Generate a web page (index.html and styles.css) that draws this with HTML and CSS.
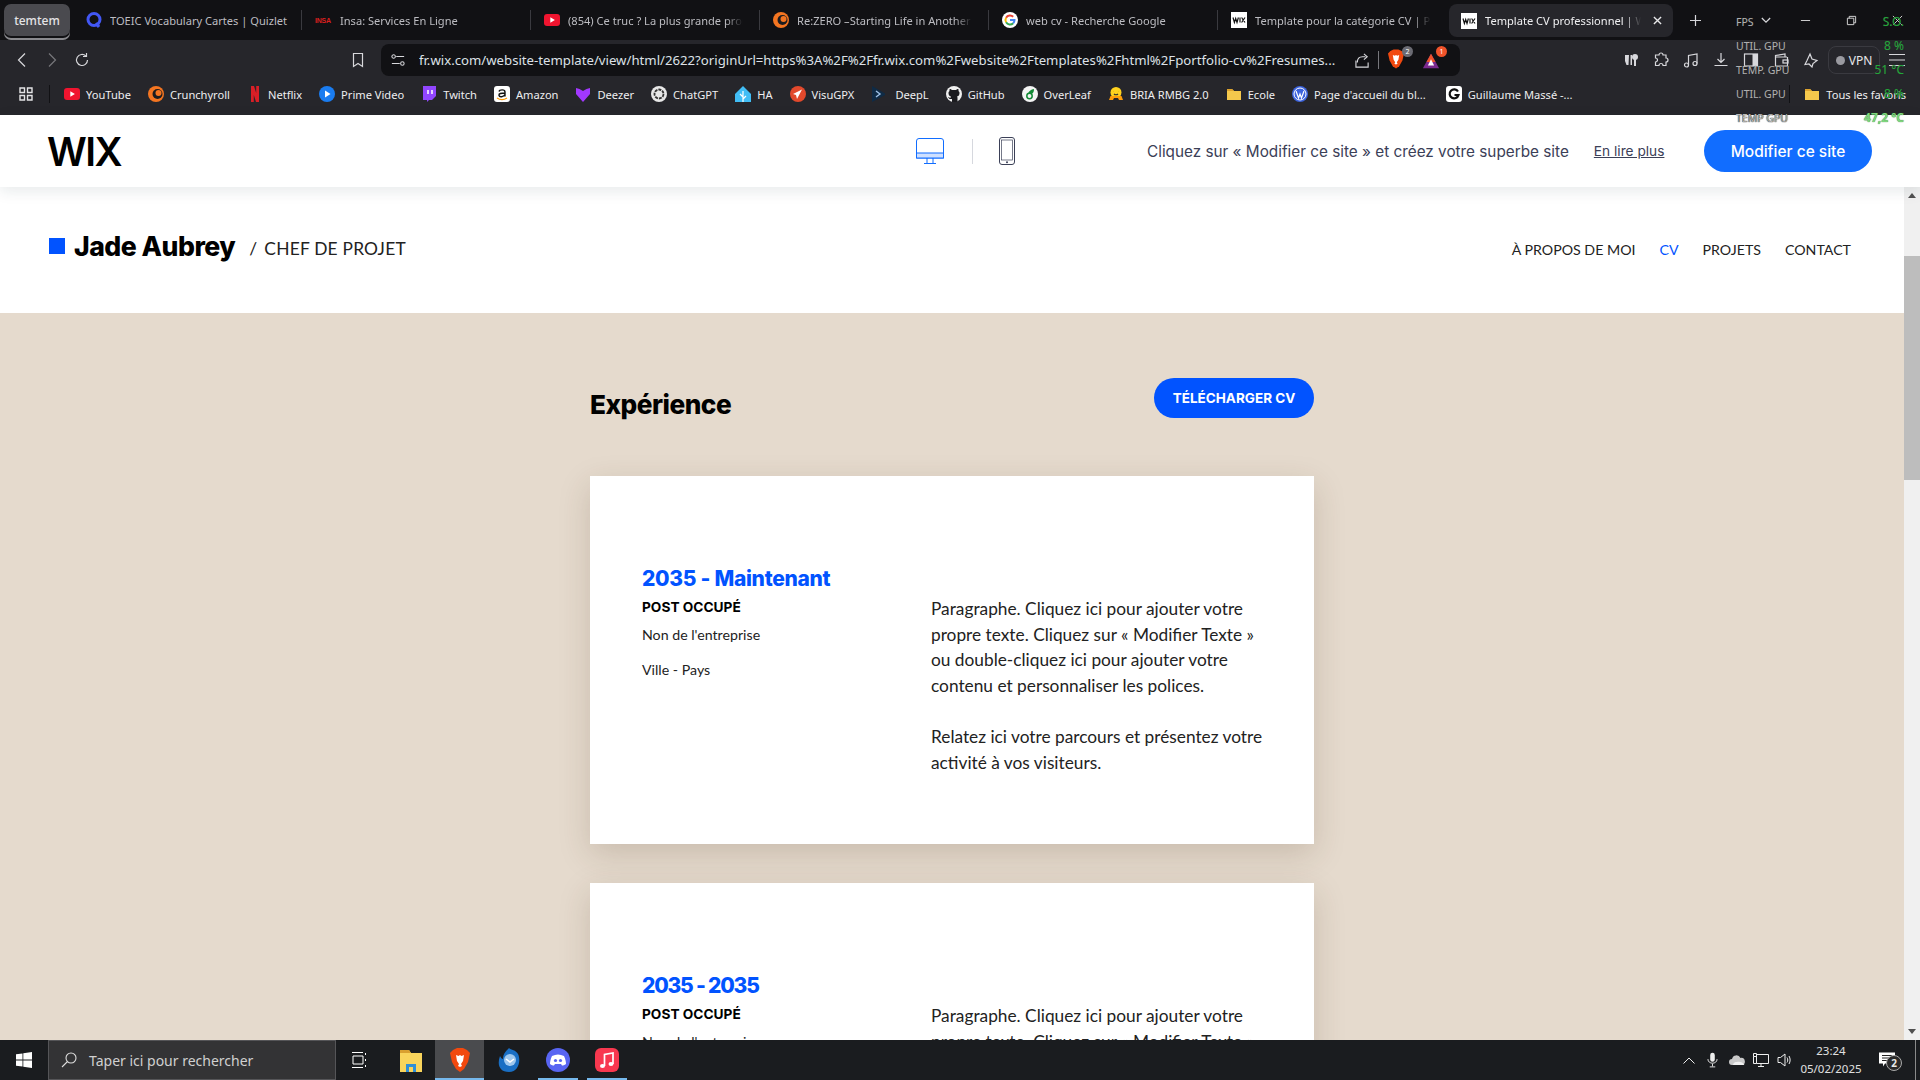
FILE: index.html
```html
<!DOCTYPE html>
<html lang="fr">
<head>
  <meta charset="UTF-8">
  <meta name="viewport" content="width=device-width, initial-scale=1.0">
  <title>Template CV professionnel</title>
  <link rel="stylesheet" href="styles.css">
</head>
<body>

  <svg class="defs" aria-hidden="true">
    <symbol id="yt" viewBox="0 0 16 16"><rect x="0" y="2" width="16" height="12" rx="3" fill="#f0142f"/><path d="M6.3 5.2l4.6 2.8-4.6 2.8z" fill="#fff"/></symbol>
    <symbol id="crunchy" viewBox="0 0 16 16"><circle cx="8" cy="8" r="8" fill="#f47521"/><circle cx="9.5" cy="8" r="5" fill="#1c1c20"/><circle cx="10.5" cy="7" r="3" fill="#f47521"/></symbol>
    <symbol id="wixfav" viewBox="0 0 16 16"><rect width="16" height="16" fill="#fff"/><path d="M2 5.5l1.4 5 1.3-4 1.3 4 1.4-5M9 5.5v5M10.6 5.5l3.4 5M14 5.5l-3.4 5" fill="none" stroke="#111" stroke-width="1.2"/></symbol>
    <symbol id="lion" viewBox="0 0 20 24"><path d="M3 2l4-2h6l4 2 3 3-2 9-4 7-4 3-4-3-4-7-2-9z" fill="#f1490f"/><path d="M6 7l2.5 1L10 7l1.5 1L14 7l-1 6-2 3 1 2-2 1-2-1 1-2-2-3z" fill="#fff"/></symbol>
  </svg>

  <header class="chrome">
    <div class="tabs">
      <div class="tab-group">temtem</div>
      <div class="tab tab-full">
        <svg class="fav" viewBox="0 0 16 16"><circle cx="8" cy="7.5" r="6" fill="none" stroke="#4257f5" stroke-width="3"/><path d="M10 11l3 4" stroke="#4257f5" stroke-width="3"/></svg>
        <span class="tab-title">TOEIC Vocabulary Cartes | Quizlet</span>
      </div>
      <div class="tab">
        <span class="fav-insa">INSA</span>
        <span class="tab-title">Insa: Services En Ligne</span>
      </div>
      <div class="tab">
        <svg class="fav"><use href="#yt"/></svg>
        <span class="tab-title">(854) Ce truc ? La plus grande proie du monde</span>
      </div>
      <div class="tab">
        <svg class="fav"><use href="#crunchy"/></svg>
        <span class="tab-title">Re:ZERO –Starting Life in Another World</span>
      </div>
      <div class="tab">
        <svg class="fav" viewBox="0 0 16 16"><circle cx="8" cy="8" r="8" fill="#fff"/><g fill="none" stroke-width="2"><path d="M4.1 5.7A4.5 4.5 0 0 1 11.2 4.8" stroke="#ea4335"/><path d="M4.1 5.7A4.5 4.5 0 0 0 4.1 10.3" stroke="#fbbc05"/><path d="M4.1 10.3A4.5 4.5 0 0 0 11.2 11.2" stroke="#34a853"/><path d="M11.2 11.2A4.5 4.5 0 0 0 12.5 8H8" stroke="#4285f4"/></g></svg>
        <span class="tab-title">web cv - Recherche Google</span>
      </div>
      <div class="tab tab-last">
        <svg class="fav"><use href="#wixfav"/></svg>
        <span class="tab-title">Template pour la catégorie CV | Portfolio et CV</span>
      </div>
      <div class="tab-active">
        <svg class="fav"><use href="#wixfav"/></svg>
        <span class="tab-title">Template CV professionnel | Wix</span>
        <svg class="tab-close" viewBox="0 0 10 10"><path d="M1 1l8 8M9 1l-8 8" stroke="#e8e8ea" stroke-width="1.5"/></svg>
      </div>
      <svg class="tab-plus" viewBox="0 0 12 12"><path d="M6 0v12M0 6h12" stroke="#d8d8dc" stroke-width="1.3"/></svg>
      <svg class="tab-list" viewBox="0 0 12 8"><path d="M1 1l5 5 5-5" fill="none" stroke="#d8d8dc" stroke-width="1.5"/></svg>
      <div class="win-btns">
        <div class="win-btn"><svg viewBox="0 0 12 12"><path d="M1 6h10" stroke="#ddd"/></svg></div>
        <div class="win-btn"><svg viewBox="0 0 12 12"><path d="M1.5 3.5h7v7h-7zM3.5 3.5v-2h7v7h-2" fill="none" stroke="#ddd"/></svg></div>
        <div class="win-btn"><svg viewBox="0 0 12 12"><path d="M1 1l10 10M11 1L1 11" stroke="#ddd"/></svg></div>
      </div>
    </div>

    <div class="toolbar">
      <div class="tool"><svg viewBox="0 0 16 16"><path d="M11 1.5L4.5 8l6.5 6.5" class="line"/></svg></div>
      <div class="tool tool-off"><svg viewBox="0 0 16 16"><path d="M5 1.5L11.5 8 5 14.5" class="line"/></svg></div>
      <div class="tool"><svg viewBox="0 0 16 16"><path d="M13.5 8a5.5 5.5 0 1 1-1.6-3.9M12.5 1v3.5H9" class="line"/></svg></div>
      <div class="tool tool-mark"><svg viewBox="0 0 16 16"><path d="M3.5 1.5h9v13L8 11.5l-4.5 3z" class="line"/></svg></div>
      <div class="urlbar">
        <svg class="url-tune" viewBox="0 0 16 16"><path d="M6 4h9M1 12h9" class="line"/><circle cx="3" cy="4" r="2" class="line"/><circle cx="13" cy="12" r="2" class="line"/></svg>
        <span class="url-text">fr.wix.com/website-template/view/html/2622?originUrl=https%3A%2F%2Ffr.wix.com%2Fwebsite%2Ftemplates%2Fhtml%2Fportfolio-cv%2Fresumes...</span>
        <svg class="url-share" viewBox="0 0 16 16"><path d="M11 4H8C4 4 2.5 7 2.5 10M9.5 1L13 4 9.5 7M1 8v7h13v-5" class="line"/></svg>
        <span class="url-sep"></span>
        <div class="shield">
          <svg class="shield-lion"><use href="#lion"/></svg>
          <span class="shield-badge">2</span>
        </div>
        <div class="shield">
          <svg class="shield-tri" viewBox="0 0 20 18"><path d="M10 1l9 16H1z" fill="#7b2a8e"/><path d="M10 1l5 9H5z" fill="#f0532a"/><path d="M10 7l3.5 7h-7z" fill="#fff"/></svg>
          <span class="shield-badge shield-red">1</span>
        </div>
      </div>
      <div class="tools-right">
        <div class="tool"><svg viewBox="0 0 16 16"><path d="M2 3v6l1.5 4h2L6 3zM7.5 3v10H9V3z" fill="#d8d8dc"/><circle cx="12" cy="5" r="3" fill="#d8d8dc"/><path d="M12 7v7" stroke="#d8d8dc" stroke-width="2"/></svg></div>
        <div class="tool"><svg viewBox="0 0 16 16"><path d="M6 3a2 2 0 0 1 4 0h3v3a2 2 0 0 1 0 4v3.5H10a2 2 0 0 0-4 0H2.5V10a2 2 0 0 0 0-4V3z" class="line"/></svg></div>
        <div class="tool"><svg viewBox="0 0 16 16"><circle cx="3.5" cy="13" r="2" class="line"/><circle cx="12" cy="11.5" r="2" class="line"/><path d="M5.5 13V3.5L14 2v9.5" class="line"/></svg></div>
        <div class="tool"><svg viewBox="0 0 16 16"><path d="M8 1v9M4.5 7L8 10.5 11.5 7M1.5 13.5h13" class="line"/></svg></div>
        <div class="tool"><svg viewBox="0 0 16 16"><rect x="1.5" y="2" width="13" height="12" class="line"/><rect x="9.5" y="2" width="5" height="12" fill="#d8d8dc"/></svg></div>
        <div class="tool"><svg viewBox="0 0 16 16"><path d="M14 5H2.5V14h12V5M2.5 5V3.5L12 2v3" class="line"/><rect x="10" y="8" width="5" height="3" class="line"/></svg></div>
        <div class="tool"><svg viewBox="0 0 16 16"><path d="M7 2l2 5 5 1.5-4 3-1 3.5-3-3-4 .5 2-4z" class="line"/></svg></div>
        <div class="vpn"><span class="vpn-dot"></span>VPN</div>
        <div class="tool"><svg viewBox="0 0 16 16"><path d="M0 2.5h16M0 8h16M0 13.5h16" class="line"/></svg></div>
      </div>
    </div>

    <div class="bookmarks">
      <svg class="apps" viewBox="0 0 14 14"><path d="M1 1h4.5v4.5H1zM8.5 1H13v4.5H8.5zM1 8.5h4.5V13H1zM8.5 8.5H13V13H8.5z" fill="none" stroke="#e4e4e6" stroke-width="1.4"/></svg>
      <span class="bm-sep"></span>
      <div class="bm"><svg class="fav"><use href="#yt"/></svg>YouTube</div>
      <div class="bm"><svg class="fav"><use href="#crunchy"/></svg>Crunchyroll</div>
      <div class="bm bm-netflix"><svg class="fav" viewBox="0 0 16 16"><path d="M4 0h3l5 16H9zM4 0h2.8v16H4zM9.2 0H12v16H9.2z" fill="#d81f26"/></svg>Netflix</div>
      <div class="bm"><svg class="fav" viewBox="0 0 16 16"><circle cx="8" cy="8" r="8" fill="#1a7cf0"/><path d="M6 4.5L11.5 8 6 11.5z" fill="#fff"/></svg>Prime Video</div>
      <div class="bm"><svg class="fav" viewBox="0 0 16 16"><path d="M2 0h13v10l-4 4H8l-2 2v-2H2z" fill="#9146ff"/><path d="M7 4v4M11 4v4" stroke="#fff" stroke-width="1.5"/></svg>Twitch</div>
      <div class="bm"><svg class="fav" viewBox="0 0 16 16"><rect width="16" height="16" rx="3" fill="#fff"/><path d="M5 5.5c.5-2 6-2.5 6 .5v4.5M11 7C7 7 4.5 7.5 5 9.5s4.5 1.5 6-1" fill="none" stroke="#111" stroke-width="1.4"/><path d="M3 12c3 2 7 2 10 0" fill="none" stroke="#f90" stroke-width="1.2"/></svg>Amazon</div>
      <div class="bm"><svg class="fav" viewBox="0 0 16 16"><path d="M8 16L1 8V2l3.5 1L8 5l3.5-2L15 2v6z" fill="#a238ff"/></svg>Deezer</div>
      <div class="bm"><svg class="fav" viewBox="0 0 16 16"><circle cx="8" cy="8" r="8" fill="#e8e8e8"/><circle cx="8" cy="8" r="4.5" fill="none" stroke="#333" stroke-width="1.8" stroke-dasharray="3 1"/></svg>ChatGPT</div>
      <div class="bm"><svg class="fav" viewBox="0 0 16 16"><path d="M8 0l8 8v8H0V8z" fill="#41bdf5"/><path d="M8 5v11M8 11L5 8M8 13l3-3" stroke="#fff" stroke-width="1.2"/></svg>HA</div>
      <div class="bm"><svg class="fav" viewBox="0 0 16 16"><circle cx="8" cy="8" r="8" fill="#e2492c"/><path d="M12 3.5L7 13l-1-4-3-1z" fill="#fff"/></svg>VisuGPX</div>
      <div class="bm bm-deepl"><svg class="fav" viewBox="0 0 16 16"><path d="M1 0l13 7.5V9L1 16z" fill="#0f2b46"/><path d="M5 5l4 3-4 3" fill="none" stroke="#9ec1e6" stroke-width="1.4"/></svg>DeepL</div>
      <div class="bm"><svg class="fav" viewBox="0 0 16 16"><circle cx="8" cy="8" r="8" fill="#f0f0f0"/><path d="M6 16v-3c-3 .5-3.5-1-4-2 1 0 1.5 1 2.5 1 0-1 .5-1.5.5-1.5C3 10 2.5 8.5 2.5 7c0-1 .5-1.5 1-2-.2-.7 0-1.5.2-2 1 0 1.8.5 2.3 1h4c.5-.5 1.3-1 2.3-1 .2.5.4 1.3.2 2 .5.5 1 1 1 2 0 1.5-.5 3-2.5 3.5 0 0 .5.5.5 1.5v4z" fill="#1c1c20"/></svg>GitHub</div>
      <div class="bm"><svg class="fav" viewBox="0 0 16 16"><circle cx="8" cy="8" r="8" fill="#f4f4f4"/><circle cx="7.5" cy="10" r="2.7" fill="none" stroke="#138a36" stroke-width="1.5"/><path d="M6 7.5C7 5 9 3.5 12 3c0 3-1 4.5-3 5" fill="#138a36"/></svg>OverLeaf</div>
      <div class="bm"><svg class="fav" viewBox="0 0 16 16"><circle cx="8" cy="6.5" r="5.5" fill="#ffd21e"/><path d="M2.5 10L1 14h4l1-2h4l1 2h4l-1.5-4z" fill="#ff9d0b"/><path d="M5.5 5.5h.1M10.5 5.5h.1M6 8c1 1 3 1 4 0" stroke="#333" stroke-width="1.2" fill="none"/></svg>BRIA RMBG 2.0</div>
      <div class="bm"><svg class="fav" viewBox="0 0 16 16"><path d="M1 3h5l2 2h7v9H1z" fill="#f5c84c"/><path d="M1 3h5l2 2H1z" fill="#dca22e"/></svg>Ecole</div>
      <div class="bm bm-blog"><svg class="fav" viewBox="0 0 16 16"><circle cx="8" cy="8" r="8" fill="#3c63dd"/><circle cx="8" cy="8" r="6" fill="none" stroke="#fff"/><path d="M4 5l2.5 7L8 8l1.5 4L12 5" fill="none" stroke="#fff" stroke-width="1.2"/></svg>Page d'accueil du bl...</div>
      <div class="bm"><svg class="fav" viewBox="0 0 16 16"><rect width="16" height="16" rx="3" fill="#fff"/><path d="M12 5.5A4.5 4.5 0 1 0 12.5 9H8.5" fill="none" stroke="#111" stroke-width="2.2"/></svg>Guillaume Massé -...</div>
      <div class="bm-end">
        <span class="bm-sep"></span>
        <div class="bm"><svg class="fav" viewBox="0 0 16 16"><path d="M1 3h5l2 2h7v9H1z" fill="#f5c84c"/><path d="M1 3h5l2 2H1z" fill="#dca22e"/></svg>Tous les favoris</div>
      </div>
    </div>
  </header>

  <div class="wixbar">
    <div class="wix-logo">WIX</div>
    <div class="devices">
      <svg class="dev-desktop" viewBox="0 0 28 26"><path d="M3 .5h22A2.5 2.5 0 0 1 27.5 3v17H.5V3A2.5 2.5 0 0 1 3 .5z" fill="#fff" stroke="#116dff"/><rect x=".5" y="15" width="27" height="5" fill="#cfe0ff" stroke="#116dff"/><path d="M11 20v5M17 20v5M8 25.5h12" stroke="#116dff"/></svg>
      <span class="dev-sep"></span>
      <svg class="dev-phone" viewBox="0 0 16 28"><rect x=".5" y=".5" width="15" height="27" rx="2.5" fill="#fff" stroke="#3b4057"/><rect x="2.5" y="3" width="11" height="20" fill="#fff" stroke="#3b4057" stroke-width=".7"/><circle cx="8" cy="25.3" r="1" fill="#3b4057"/></svg>
    </div>
    <div class="wix-msg">Cliquez sur « Modifier ce site » et créez votre superbe site</div>
    <a class="wix-more">En lire plus</a>
    <div class="wix-edit">Modifier ce site</div>
  </div>

  <div class="viewport">
    <main class="page">
      <div class="site-head">
        <div class="brand">
          <span class="brand-square"></span>
          <span class="brand-name">Jade Aubrey</span>
          <span class="brand-role"><span class="brand-slash">/</span>CHEF DE PROJET</span>
        </div>
        <nav class="site-nav">
          <a>À PROPOS DE MOI</a>
          <a class="nav-current">CV</a>
          <a>PROJETS</a>
          <a>CONTACT</a>
        </nav>
      </div>

      <section class="experience">
        <div class="exp-head">
          <h2>Expérience</h2>
          <a class="cv-btn">TÉLÉCHARGER CV</a>
        </div>

        <article class="job">
          <div class="job-left">
            <h3>2035 - Maintenant</h3>
            <h4>POST OCCUPÉ</h4>
            <p class="job-company">Non de l'entreprise</p>
            <p class="job-place">Ville - Pays</p>
          </div>
          <div class="job-text">
            <p>Paragraphe. Cliquez ici pour ajouter votre propre texte. Cliquez sur « Modifier Texte » ou double-cliquez ici pour ajouter votre contenu et personnaliser les polices.</p>
            <p>Relatez ici votre parcours et présentez votre activité à vos visiteurs.</p>
          </div>
        </article>

        <article class="job">
          <div class="job-left">
            <h3 class="job-years">2035 - 2035</h3>
            <h4>POST OCCUPÉ</h4>
            <p class="job-company">Non de l'entreprise</p>
            <p class="job-place">Ville - Pays</p>
          </div>
          <div class="job-text">
            <p>Paragraphe. Cliquez ici pour ajouter votre propre texte. Cliquez sur « Modifier Texte » ou double-cliquez ici pour ajouter votre contenu et personnaliser les polices.</p>
            <p>Relatez ici votre parcours et présentez votre activité à vos visiteurs.</p>
          </div>
        </article>
      </section>
    </main>

    <div class="scrollbar">
      <span class="arrow-up"></span>
      <span class="thumb"></span>
      <span class="arrow-down"></span>
    </div>
  </div>

  <footer class="taskbar">
    <div class="start"><svg viewBox="0 0 16 16"><path d="M0 2.3l6.5-.9v6.2H0zM7.3 1.3L16 0v7.6H7.3zM0 8.4h6.5v6.2L0 13.7zM7.3 8.4H16V16l-8.7-1.2z" fill="#fff"/></svg></div>
    <div class="search">
      <svg viewBox="0 0 16 16"><circle cx="10" cy="6" r="5" fill="none" stroke="#ddd" stroke-width="1.1"/><path d="M6.5 9.5L1 15" stroke="#ddd" stroke-width="1.1"/></svg>
      Taper ici pour rechercher
    </div>
    <div class="task task-first"><svg class="task-view" viewBox="0 0 16 16"><path d="M0 .5h11M0 15.5h11M1 4h10v8H1zM13.5 1v2M13.5 7v2M13.5 13v2" fill="none" stroke="#fff"/></svg></div>
    <div class="task"><svg class="task-ic" viewBox="0 0 22 24"><path d="M0 2h9l2 3h11v19H0z" fill="#f9d45c"/><path d="M0 2h9l2 3H0z" fill="#d9a030"/><path d="M6 16h10v8H6z" fill="#2f8fd8"/><path d="M9 19h4v5H9z" fill="#f9d45c"/></svg></div>
    <div class="task task-open"><svg class="task-ic"><use href="#lion"/></svg></div>
    <div class="task"><svg class="task-ic" viewBox="0 0 24 24"><path d="M12 0c2 2 7 2 9 6 3 6 1 18-9 18S0 16 3 8c1 2 2 3 3 3 0-5 3-8 6-11z" fill="#1a6fc4"/><circle cx="13" cy="12" r="6" fill="#9fc8ee"/><path d="M9 11l4 3 4-3" fill="none" stroke="#fff" stroke-width="1.5"/></svg></div>
    <div class="task task-run"><svg class="task-ic" viewBox="0 0 24 24"><circle cx="12" cy="12" r="12" fill="#5865f2"/><path d="M6 8c4-2 8-2 12 0 1.5 3 2 6 2 8-1.5 1-3 1.5-4 1.5l-1-1.5H9l-1 1.5C7 17.5 5.5 17 4 16c0-2 .5-5 2-8z" fill="#fff"/><circle cx="9.5" cy="12.5" r="1.6" fill="#5865f2"/><circle cx="14.5" cy="12.5" r="1.6" fill="#5865f2"/></svg></div>
    <div class="task task-run"><svg class="task-ic" viewBox="0 0 24 24"><rect width="24" height="24" rx="6" fill="#f8384f"/><path d="M9.5 18V6.5L18 5v11" fill="none" stroke="#fff" stroke-width="1.7"/><ellipse cx="7.5" cy="18" rx="2.5" ry="2" fill="#fff"/><ellipse cx="16" cy="16" rx="2.5" ry="2" fill="#fff"/></svg></div>

    <div class="tray">
      <svg class="tray-chevron" viewBox="0 0 12 7"><path d="M.5 6.5L6 1l5.5 5.5" fill="none" stroke="#eee"/></svg>
      <svg class="tray-mic" viewBox="0 0 12 16"><rect x="3.5" y="0" width="5" height="10" rx="2.5" fill="#eee"/><path d="M1 7c0 6 10 6 10 0M6 12v3M3 15.5h6" fill="none" stroke="#eee"/></svg>
      <svg class="tray-cloud" viewBox="0 0 16 10"><path d="M3 10a3 3 0 0 1 0-6 4.5 4.5 0 0 1 8.5-1A3.5 3.5 0 0 1 13 10z" fill="#c9c9c9"/><path d="M4 10c0-2 2-3.5 4-3 2-1 6 0 7.5 3z" fill="#f0f0f0"/></svg>
      <svg class="tray-net" viewBox="0 0 16 14"><path d="M.5.5h3v3h-3zM3.5 1.5h12v9h-12zM.5 3.5v7h3M8 10.5v3M5 13.5h6" fill="none" stroke="#eee"/></svg>
      <svg class="tray-vol" viewBox="0 0 16 14"><path d="M1 4.5h2.5L8 1v12L3.5 9.5H1zM10 4.5c1 1.5 1 3.5 0 5M12 3c1.5 2.5 1.5 5.5 0 8" fill="none" stroke="#eee"/></svg>
      <div class="clock"><span>23:24</span><span>05/02/2025</span></div>
      <div class="notif">
        <svg viewBox="0 0 16 14"><path d="M0 0h16v11H6l-2 3v-3H0z" fill="#fff"/><path d="M3 3h10M3 5.5h10M3 8h7" stroke="#222"/></svg>
        <span class="notif-badge">2</span>
      </div>
      <span class="desk-peek"></span>
    </div>
  </footer>

  <div class="fps-overlay">
    <span class="fps-fps">FPS</span><span class="fps-val fps-so">S.O.</span>
    <span class="fps-a">UTIL. GPU</span><span class="fps-val fps-a">8 %</span>
    <span class="fps-b">TEMP. GPU</span><span class="fps-val fps-b">51 °C</span>
    <span class="fps-c">UTIL. GPU</span><span class="fps-val fps-c">8 %</span>
    <span class="fps-d">TEMP GPU</span><span class="fps-val fps-d">47,2 °C</span>
  </div>

</body>
</html>
```

FILE: styles.css
```css
* {
  box-sizing: border-box;
}
html, body {
  margin: 0;
  height: 100%;
}
body {
  width: 1920px;
  height: 1080px;
  overflow: hidden;
  display: flex;
  flex-direction: column;
  font-family: "Open Sans", Arial, sans-serif;
  background-color: #fff;
  position: relative;
}
.defs {
  position: absolute;
  width: 0;
  height: 0;
}
.line {
  fill: none;
  stroke: #d8d8dc;
  stroke-width: 1.2;
}

/* browser chrome */
.chrome {
  height: 115px;
  flex: none;
  background-color: #26262b;
  color: #e8e8ea;
  font-family: "Noto Sans", Arial, sans-serif;
}
.tabs {
  height: 40px;
  display: flex;
  align-items: center;
  background-color: #111114;
  padding-left: 4px;
}
.tab-group {
  width: 66px;
  height: 32px;
  margin-right: 3px;
  border-radius: 7px;
  background-color: #4a4a4f;
  box-shadow: 0 2px 0 #111114, 0 4px 0 #8a8a8e;
  display: flex;
  align-items: center;
  justify-content: center;
  font-size: 12px;
  font-weight: 500;
  color: #e4e4e6;
}
.tab {
  width: 229px;
  height: 20px;
  padding-left: 13px;
  display: flex;
  align-items: center;
  gap: 8px;
  border-right: 1px solid #3a3a3f;
  font-size: 11.1px;
  color: #bdbdc2;
}
.tab-last {
  border-right: none;
  margin-right: 2px;
}
.fav {
  width: 16px;
  height: 16px;
  flex: none;
}
.fav-insa {
  width: 17px;
  flex: none;
  font-family: "Liberation Sans", Arial, sans-serif;
  font-size: 7px;
  font-weight: 700;
  letter-spacing: -0.2px;
  color: #d9201f;
}
.tab-title {
  flex: 1;
  min-width: 0;
  margin-right: 16px;
  white-space: nowrap;
  overflow: hidden;
  -webkit-mask-image: linear-gradient(to right, #000 90%, transparent);
  mask-image: linear-gradient(to right, #000 90%, transparent);
}
/* title fits, so no fade */
.tab-full .tab-title {
  margin-right: 0;
  -webkit-mask-image: none;
  mask-image: none;
}
.tab-active {
  width: 224px;
  height: 33px;
  margin-top: 1px;
  padding: 0 11px 0 12px;
  border-radius: 8px;
  background-color: #26262b;
  display: flex;
  align-items: center;
  gap: 8px;
  font-size: 11.1px;
  color: #f0f0f2;
}
.tab-active .tab-title {
  margin-right: 4px;
}
.tab-close {
  width: 9px;
  height: 9px;
  flex: none;
}
.tab-plus {
  width: 11px;
  height: 11px;
  margin-left: 17px;
}
.tab-list {
  width: 10px;
  height: 7px;
  margin-left: 60px;
}
.win-btns {
  margin-left: auto;
  display: flex;
}
.win-btn {
  width: 46px;
  height: 40px;
  display: flex;
  align-items: center;
  justify-content: center;
}
.win-btn svg {
  width: 11px;
  height: 11px;
}

.toolbar {
  height: 40px;
  padding-left: 7px;
  display: flex;
  align-items: center;
}
.tool {
  width: 30px;
  height: 30px;
  flex: none;
  display: flex;
  align-items: center;
  justify-content: center;
}
.tool svg {
  width: 16px;
  height: 16px;
}
.tool-off {
  opacity: 0.45;
}
.tool-mark {
  margin-left: 246px;
}
.urlbar {
  width: 1079px;
  height: 32px;
  margin-left: 8px;
  padding: 0 10px;
  border-radius: 8px;
  background-color: #111114;
  display: flex;
  align-items: center;
  flex: none;
}
.url-tune {
  width: 14px;
  height: 14px;
  flex: none;
}
.url-text {
  margin-left: 14px;
  width: 926px;
  flex: none;
  font-size: 13.2px;
  color: #dde1e7;
  white-space: nowrap;
  overflow: hidden;
}
.url-share {
  width: 15px;
  height: 15px;
  margin-left: 10px;
  flex: none;
}
.url-sep {
  width: 1px;
  height: 18px;
  margin-left: 8px;
  background-color: #77777c;
}
.shield {
  position: relative;
  width: 20px;
  height: 22px;
  margin-left: 9px;
  flex: none;
}
.shield + .shield {
  margin-left: 14px;
}
.shield-lion {
  width: 16px;
  height: 20px;
}
.shield-tri {
  width: 18px;
  height: 18px;
  margin-top: 3px;
}
.shield-badge {
  position: absolute;
  top: -3px;
  right: -5px;
  width: 11px;
  height: 11px;
  border-radius: 50%;
  background-color: #6b6b73;
  color: #fff;
  font-size: 7px;
  line-height: 11px;
  text-align: center;
}
.shield-red {
  background-color: #f0532a;
}
.tools-right {
  margin-left: 156px;
  display: flex;
  align-items: center;
}
.vpn {
  width: 52px;
  height: 28px;
  margin: 0 2px;
  border: 1px solid #3a3a40;
  border-radius: 8px;
  display: flex;
  align-items: center;
  justify-content: center;
  gap: 4px;
  font-size: 12px;
}
.vpn-dot {
  width: 9px;
  height: 9px;
  border-radius: 50%;
  background-color: #9a9aa0;
}

.bookmarks {
  height: 35px;
  padding: 0 0 7px 19px;
  display: flex;
  align-items: center;
  font-size: 11.12px;
  color: #eeeef0;
}
.apps {
  width: 14px;
  height: 14px;
  flex: none;
}
.bm-sep {
  width: 1px;
  height: 18px;
  margin: 0 14px 0 16px;
  background-color: #111114;
  flex: none;
}
.bm {
  display: flex;
  align-items: center;
  gap: 6px;
  margin-right: 17px;
  white-space: nowrap;
}
.bm-netflix {
  gap: 5px;
}
.bm-deepl {
  gap: 8px;
}
.bm-blog {
  margin-right: 20px;
}
.bm-end {
  margin-left: auto;
  display: flex;
  align-items: center;
}
.bm-end .bm {
  margin-right: 14px;
}
.bm-end .bm-sep {
  margin-left: 0;
}

/* wix editor bar */
.wixbar {
  height: 72px;
  flex: none;
  padding: 0 48px 0 47px;
  display: flex;
  align-items: center;
  background-color: #fff;
  box-shadow: 0 4px 14px rgba(22, 45, 61, 0.1);
  position: relative;
  z-index: 2;
}
.wix-logo {
  width: 869px;
  font-family: "Inter", sans-serif;
  font-size: 39px;
  font-weight: 600;
  letter-spacing: -1.5px;
  color: #000;
}
.devices {
  display: flex;
  align-items: center;
}
.dev-desktop {
  width: 28px;
  height: 26px;
}
.dev-sep {
  width: 1px;
  height: 25px;
  margin: 0 26px 0 28px;
  background-color: #d6d8de;
}
.dev-phone {
  width: 16px;
  height: 28px;
}
.wix-msg {
  margin-left: 132px;
  font-family: "Inter", sans-serif;
  font-size: 15.3px;
  color: #3b4057;
}
.wix-more {
  margin-left: 25px;
  font-family: "Inter", sans-serif;
  font-size: 13.7px;
  color: #3b4057;
  text-decoration: underline;
}
.wix-edit {
  width: 168px;
  height: 42px;
  margin-left: auto;
  border-radius: 21px;
  background-color: #116dff;
  color: #fff;
  font-family: "Inter", sans-serif;
  font-size: 15.5px;
  font-weight: 500;
  display: flex;
  align-items: center;
  justify-content: center;
}

/* template page */
.viewport {
  flex: 1;
  min-height: 0;
  display: flex;
  overflow: hidden;
}
.page {
  flex: 1;
  min-width: 0;
  background-color: #e5dacd;
}
.site-head {
  height: 126px;
  padding: 0 53px 0 49px;
  display: flex;
  align-items: center;
  justify-content: space-between;
  background-color: #fff;
  color: #000;
}
.brand {
  display: flex;
  align-items: center;
  margin-bottom: 9px;
}
.brand-square {
  width: 16px;
  height: 16px;
  margin-right: 9px;
  background-color: #0153ff;
}
.brand-name {
  font-family: "Inter", sans-serif;
  font-size: 26.6px;
  font-weight: 800;
  letter-spacing: -0.5px;
}
.brand-role {
  margin: 5px 0 0 14px;
  font-family: "Lato", sans-serif;
  font-size: 17.4px;
  font-weight: 400;
  letter-spacing: 0.2px;
  color: #222;
}
.brand-slash {
  margin-right: 7px;
}
.site-nav {
  display: flex;
  gap: 24px;
  margin-bottom: 2px;
  font-family: "Lato", sans-serif;
  font-size: 14.2px;
  color: #222;
}
.nav-current {
  color: #0153ff;
}

.experience {
  width: 724px;
  margin: 0 auto;
  padding-top: 65px;
}
.exp-head {
  height: 40px;
  margin-bottom: 58px;
  display: flex;
  justify-content: space-between;
}
.exp-head h2 {
  margin: 12px 0 0;
  font-family: "Inter", sans-serif;
  font-size: 26.2px;
  font-weight: 800;
  line-height: 30px;
  letter-spacing: -0.5px;
  color: #000;
}
.cv-btn {
  width: 160px;
  height: 40px;
  border-radius: 20px;
  background-color: #0153ff;
  color: #fff;
  font-family: "Inter", sans-serif;
  font-size: 13.5px;
  font-weight: 700;
  display: flex;
  align-items: center;
  justify-content: center;
}
.job {
  height: 368px;
  margin-bottom: 39px;
  padding: 88px 48px 0 52px;
  display: grid;
  grid-template-columns: 289px 1fr;
  background-color: #fff;
  box-shadow: 0 10px 30px rgba(70, 50, 30, 0.18);
}
.job-left h3 {
  margin: 0;
  font-family: "Inter", sans-serif;
  font-size: 21px;
  font-weight: 800;
  line-height: 30px;
  letter-spacing: -0.3px;
  color: #0153ff;
}
.job-left .job-years {
  letter-spacing: -1.2px;
}
.job-left h4 {
  margin: 3px 0 0;
  font-family: "Inter", sans-serif;
  font-size: 13.7px;
  font-weight: 700;
  line-height: 20px;
  color: #000;
}
.job-left p {
  margin: 0;
  font-family: "Lato", sans-serif;
  font-weight: 400;
  font-size: 14.2px;
  line-height: 20px;
  color: #222;
}
.job-left .job-company {
  margin-top: 8px;
}
.job-left .job-place {
  margin-top: 15px;
}
.job-text {
  padding-top: 32px;
  font-family: "Lato", sans-serif;
  font-size: 17.3px;
  font-weight: 400;
  line-height: 25.6px;
  color: #222;
}
.job-text p {
  margin: 0 0 25.6px;
}

.scrollbar {
  width: 16px;
  flex: none;
  position: relative;
  background-color: #f0f0f0;
}
.thumb {
  position: absolute;
  top: 69px;
  left: 0;
  width: 16px;
  height: 224px;
  background-color: #bdbdbd;
}
.arrow-up, .arrow-down {
  position: absolute;
  left: 4px;
  width: 0;
  height: 0;
  border-left: 4px solid transparent;
  border-right: 4px solid transparent;
}
.arrow-up {
  top: 6px;
  border-bottom: 5px solid #505050;
}
.arrow-down {
  bottom: 6px;
  border-top: 5px solid #505050;
}

/* windows taskbar */
.taskbar {
  height: 40px;
  flex: none;
  display: flex;
  align-items: stretch;
  background-color: #1a1c1f;
  color: #e8e8e8;
  font-family: "Noto Sans", Arial, sans-serif;
}
.start {
  width: 48px;
  display: flex;
  align-items: center;
  justify-content: center;
}
.start svg {
  width: 16px;
  height: 16px;
}
.search {
  width: 288px;
  padding-left: 12px;
  display: flex;
  align-items: center;
  gap: 12px;
  background-color: #333335;
  border: 1px solid #555558;
  font-size: 14px;
  color: #d0d0d0;
}
.search svg {
  width: 16px;
  height: 16px;
  flex: none;
}
.task {
  width: 49px;
  display: flex;
  align-items: center;
  justify-content: center;
}
.task-first {
  width: 48px;
  margin-right: 2px;
}
.task-view {
  width: 16px;
  height: 16px;
}
.task-ic {
  width: 24px;
  height: 24px;
}
.task-open {
  background-color: #4a4b4e;
  box-shadow: inset 0 -2px 0 #76b9ed;
}
.task-run {
  box-shadow: inset 0 -2px 0 #76b9ed;
  width: 40px;
  margin: 0 4.5px;
}
.tray {
  margin-left: auto;
  display: flex;
  align-items: center;
}
.tray-chevron {
  width: 12px;
  height: 7px;
  margin-right: 12px;
}
.tray-mic {
  width: 11px;
  height: 16px;
  margin-right: 11px;
}
.tray-cloud {
  width: 16px;
  height: 10px;
  margin-right: 8px;
}
.tray-net {
  width: 16px;
  height: 14px;
  margin-right: 8px;
}
.tray-vol {
  width: 16px;
  height: 14px;
}
.clock {
  width: 76px;
  margin-right: 1px;
  display: flex;
  flex-direction: column;
  align-items: center;
  font-size: 11.5px;
  line-height: 18px;
  color: #e0e0e0;
}
.notif {
  position: relative;
  width: 24px;
  height: 20px;
  margin-left: 9px;
}
.notif svg {
  width: 16px;
  height: 15px;
}
.notif-badge {
  position: absolute;
  left: 7px;
  top: 5px;
  width: 16px;
  height: 16px;
  border-radius: 50%;
  border: 1px solid #aaa;
  background-color: #2a2a2a;
  font-size: 10px;
  line-height: 14px;
  text-align: center;
  font-weight: 700;
}
.desk-peek {
  width: 1px;
  height: 40px;
  margin: 0 4px 0 12px;
  background-color: #8a8a8a;
}

/* gpu monitoring overlay on top of everything */
.fps-overlay {
  position: absolute;
  left: 1736px;
  top: 0;
  width: 170px;
  height: 130px;
  z-index: 5;
  font-family: "Noto Sans", Arial, sans-serif;
  font-size: 10.5px;
  line-height: 14px;
  color: #b0b0b0;
  text-shadow: 0 0 1px #333;
  pointer-events: none;
}
.fps-overlay span {
  position: absolute;
  left: 0;
  white-space: nowrap;
}
.fps-overlay .fps-val {
  left: auto;
  right: 2px;
  font-size: 12px;
  color: #22a83a;
}
.fps-fps { top: 15px; }
.fps-so { top: 15px; }
.fps-a { top: 39px; }
.fps-b { top: 63px; }
.fps-c { top: 87px; }
.fps-d { top: 111px; }
.fps-overlay .fps-d {
  color: #b8b8b8;
  text-shadow: 0 0 1px #222, 0 0 1px #222;
}
.fps-overlay .fps-val.fps-d {
  color: #7ed67e;
  font-weight: 700;
  text-shadow: 0 0 1px #1a5c1a;
}
```
